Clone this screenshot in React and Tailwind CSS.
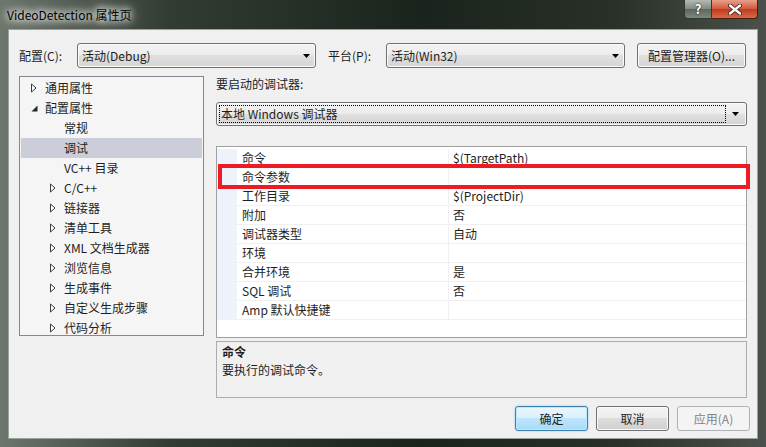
import React from 'react';

const tree = [
  { label: '通用属性', level: 0, icon: 'closed' },
  { label: '配置属性', level: 0, icon: 'open' },
  { label: '常规', level: 1 },
  { label: '调试', level: 1, selected: true },
  { label: 'VC++ 目录', level: 1 },
  { label: 'C/C++', level: 1, icon: 'closed' },
  { label: '链接器', level: 1, icon: 'closed' },
  { label: '清单工具', level: 1, icon: 'closed' },
  { label: 'XML 文档生成器', level: 1, icon: 'closed' },
  { label: '浏览信息', level: 1, icon: 'closed' },
  { label: '生成事件', level: 1, icon: 'closed' },
  { label: '自定义生成步骤', level: 1, icon: 'closed' },
  { label: '代码分析', level: 1, icon: 'closed' },
];

const props = [
  ['命令', '$(TargetPath)'],
  ['命令参数', ''],
  ['工作目录', '$(ProjectDir)'],
  ['附加', '否'],
  ['调试器类型', '自动'],
  ['环境', ''],
  ['合并环境', '是'],
  ['SQL 调试', '否'],
  ['Amp 默认快捷键', ''],
];

function TreeGlyph({ icon }) {
  if (icon === 'open') {
    return (
      <svg width="7" height="7" viewBox="0 0 7 7">
        <path d="M6.5 0.5 L6.5 6.5 L0.5 6.5 Z" fill="#262626" />
      </svg>
    );
  }
  if (icon === 'closed') {
    return (
      <svg width="6" height="10" viewBox="0 0 6 10">
        <path d="M0.5 1 L5 5 L0.5 9 Z" fill="#fff" stroke="#3a3a3a" strokeWidth="1" />
      </svg>
    );
  }
  return null;
}

function Arrow() {
  return (
    <svg width="7" height="4" viewBox="0 0 7 4">
      <path d="M0 0 L7 0 L3.5 4 Z" fill="#000" />
    </svg>
  );
}

function Combo({ text, className }) {
  return (
    <div className={'flex h-[25px] items-center justify-between rounded-[3px] border border-[#707070] bg-[linear-gradient(to_bottom,#f3f3f3_0%,#ececec_50%,#e0e0e0_50%,#d4d4d4_100%)] pl-[4px] pr-[5px] shadow-[inset_0_0_0_1px_#fbfbfb] ' + className}>
      <span>{text}</span>
      <Arrow />
    </div>
  );
}

export default function App() {
  return (
    <div className="flex h-[447px] w-[766px] flex-col overflow-hidden bg-[radial-gradient(ellipse_at_42%_55%,rgba(80,150,70,0.45),transparent_30%),linear-gradient(to_right,#6c766c_0%,#323c33_22%,#1b241c_55%,#283028_80%,#4a524b_100%)] font-['Microsoft_YaHei','Noto_Sans_CJK_SC',sans-serif] text-[12px] text-[#1e1e1e]">
      {/* title bar */}
      <div className="flex h-[29px] items-start justify-between">
        <div className="self-center pl-[7px] text-[12px] text-black [text-shadow:0_0_6px_#fff,0_0_10px_#fff,0_0_14px_#fff]">
          VideoDetection 属性页
        </div>
        <div className="mr-[8px] flex h-[19px]">
          <div className="flex w-[28px] items-center justify-center rounded-bl-[4px] border border-t-0 border-[#2f3a31] bg-[linear-gradient(to_bottom,#b3bab3_0%,#7f8a80_50%,#5c665e_50%,#7d877e_100%)] text-[13px] font-bold text-white [text-shadow:0_0_2px_#000]">
            ?
          </div>
          <div className="flex w-[46px] items-center justify-center rounded-br-[4px] border border-l-0 border-t-0 border-[#4a1c12] bg-[linear-gradient(to_bottom,#e8a08c_0%,#d2573a_50%,#c03a1c_50%,#d66a49_100%)]">
            <svg width="14" height="11" viewBox="0 0 14 11">
              <path d="M2 1.5 L12 9.5 M12 1.5 L2 9.5" stroke="#3b1a12" strokeWidth="4" strokeLinecap="round" />
              <path d="M2 1.5 L12 9.5 M12 1.5 L2 9.5" stroke="#fff" strokeWidth="2.4" strokeLinecap="round" />
            </svg>
          </div>
        </div>
      </div>

      {/* client area */}
      <div className="mx-[8px] mb-[8px] flex flex-1 flex-col border border-[#9aa39a] bg-[#f0f0f0] pb-[7px] pl-[10px] pr-[7px] pt-[13px]">
        {/* top row */}
        <div className="flex h-[25px] items-center pr-[4px]">
          <span className="w-[58px]">配置(C):</span>
          <Combo text="活动(Debug)" className="w-[239px]" />
          <span className="ml-[12px] w-[58px]">平台(P):</span>
          <Combo text="活动(Win32)" className="w-[239px]" />
          <button className="ml-[12px] flex h-[25px] w-[109px] items-center justify-center rounded-[3px] border border-[#707070] bg-[linear-gradient(to_bottom,#f3f3f3_0%,#ececec_50%,#e0e0e0_50%,#d4d4d4_100%)] shadow-[inset_0_0_0_1px_#fbfbfb]">
            配置管理器(O)...
          </button>
        </div>

        {/* main */}
        <div className="mt-[8px] flex pr-[3px]">
          <div className="h-[260px] w-[185px] border border-[#828790] bg-[#f5f5f5] pt-[1px]">
            {tree.map((t) => (
              <div
                key={t.label}
                className={'flex h-[20px] items-center ' + (t.selected ? 'mx-px bg-[#cbcdd8]' : '')}
              >
                <div className={t.level === 0 ? (t.selected ? 'w-[10px]' : 'w-[11px]') : t.selected ? 'w-[29px]' : 'w-[30px]'} />
                <div className="flex w-[14px] items-center">
                  <TreeGlyph icon={t.icon} />
                </div>
                <span>{t.label}</span>
              </div>
            ))}
          </div>

          <div className="ml-[12px] flex flex-1 flex-col">
            <div className="h-[16px] leading-[16px]">要启动的调试器:</div>
            <div className="mt-[10px] flex h-[24px] items-center rounded-[3px] border border-[#707070] bg-[linear-gradient(to_bottom,#f3f3f3_0%,#ececec_50%,#e0e0e0_50%,#d4d4d4_100%)] p-[2px] shadow-[inset_0_0_0_1px_#fbfbfb]">
              <div className="flex h-full flex-1 items-center border border-dotted border-black pl-[1px]">
                本地 Windows 调试器
              </div>
              <div className="flex w-[18px] justify-center">
                <Arrow />
              </div>
            </div>

            <div className="relative mt-[20px] h-[192px] border border-[#a0a0a0] bg-white pt-[2px]">
              {props.map(([name, value]) => (
                <div key={name} className="flex h-[19px]">
                  <div className="w-[20px] bg-[#eef2fa]" />
                  <div className="flex w-[211px] items-center border-b border-[#f0f0f0] pl-[5px]">{name}</div>
                  <div className="flex flex-1 items-center border-b border-l border-[#f0f0f0] pl-[4px]">{value}</div>
                </div>
              ))}
              <div className="absolute left-[1px] top-[17px] h-[25px] w-[532px] border-[4px] border-[#ed1c24]" />
            </div>

            <div className="mt-[3px] h-[57px] border border-[#acacac] bg-[#f0f0f0] pl-[5px] pt-[2px] leading-[16px]">
              <div className="font-bold">命令</div>
              <div className="mt-[2px]">要执行的调试命令。</div>
            </div>
          </div>
        </div>

        {/* buttons */}
        <div className="mt-[8px] flex h-[25px] justify-end gap-[8px]">
          <button className="w-[73px] rounded-[3px] border border-[#3c7fb1] bg-[linear-gradient(to_bottom,#eaf6fd_0%,#d9f0fc_50%,#bee6fd_50%,#a7d9f5_100%)] shadow-[inset_0_0_0_1px_#bfe7fd,0_0_2px_#7ecbf3]">
            确定
          </button>
          <button className="w-[73px] rounded-[3px] border border-[#707070] bg-[linear-gradient(to_bottom,#f3f3f3_0%,#ececec_50%,#dddddd_50%,#cfcfcf_100%)] shadow-[inset_0_0_0_1px_#fbfbfb]">
            取消
          </button>
          <button className="w-[73px] rounded-[3px] border border-[#adb2b5] bg-[#f4f4f4] text-[#838383]">
            应用(A)
          </button>
        </div>
      </div>
    </div>
  );
}
